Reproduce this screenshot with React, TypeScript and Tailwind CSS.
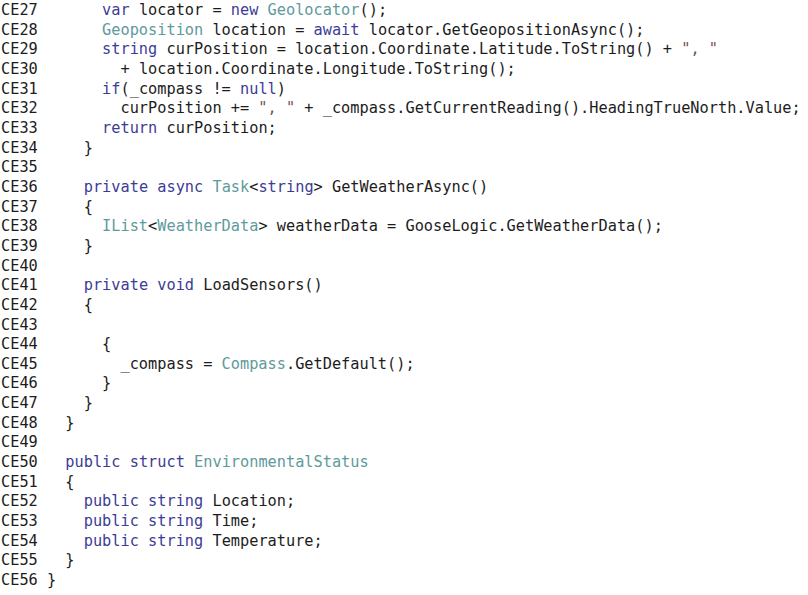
import React from "react";

const KEYWORDS = new Set([
  "var", "new", "await", "string", "if", "null", "return", "private", "async", "void", "public", "struct",
]);
const TYPES = new Set(["Geolocator", "Geoposition", "Task", "WeatherData", "IList", "Compass", "EnvironmentalStatus"]);

const lines: [number, number, string][] = [
  [27, 11, "var locator = new Geolocator();"],
  [28, 11, "Geoposition location = await locator.GetGeopositionAsync();"],
  [29, 11, 'string curPosition = location.Coordinate.Latitude.ToString() + ", "'],
  [30, 13, "+ location.Coordinate.Longitude.ToString();"],
  [31, 11, "if(_compass != null)"],
  [32, 13, 'curPosition += ", " + _compass.GetCurrentReading().HeadingTrueNorth.Value;'],
  [33, 11, "return curPosition;"],
  [34, 9, "}"],
  [35, 0, ""],
  [36, 9, "private async Task<string> GetWeatherAsync()"],
  [37, 9, "{"],
  [38, 11, "IList<WeatherData> weatherData = GooseLogic.GetWeatherData();"],
  [39, 9, "}"],
  [40, 0, ""],
  [41, 9, "private void LoadSensors()"],
  [42, 9, "{"],
  [43, 0, ""],
  [44, 11, "{"],
  [45, 13, "_compass = Compass.GetDefault();"],
  [46, 11, "}"],
  [47, 9, "}"],
  [48, 7, "}"],
  [49, 0, ""],
  [50, 7, "public struct EnvironmentalStatus"],
  [51, 7, "{"],
  [52, 9, "public string Location;"],
  [53, 9, "public string Time;"],
  [54, 9, "public string Temperature;"],
  [55, 7, "}"],
  [56, 5, "}"],
];

function tokenize(code: string) {
  const parts = code.split(/("[^"]*"|[A-Za-z_][A-Za-z0-9_]*)/).filter((p) => p !== "");
  return parts.map((p, i) => {
    let cls = "text-[#1c1c1c]";
    if (p.startsWith('"')) cls = "text-[#6e5454]";
    else if (KEYWORDS.has(p)) cls = "text-[#3c3c96]";
    else if (TYPES.has(p)) cls = "text-[#5e9a9c]";
    return (
      <span key={i} className={cls}>
        {p}
      </span>
    );
  });
}

export default function App() {
  return (
    <div className="w-[808px] h-[595px] bg-white overflow-hidden">
      <div
        className="flex flex-col pl-[1px] pt-[1px] text-[15.27px] text-[#1c1c1c] whitespace-pre"
        style={{ fontFamily: '"DejaVu Sans Mono", "Liberation Mono", monospace' }}
      >
        {lines.map(([n, col, code]) => {
          const label = "CE" + n;
          const pad = col > 0 ? " ".repeat(col - label.length) : "";
          return (
            <div key={n} className="h-[19.66px] leading-[19.66px]">
              <span>{label}</span>
              <span>{pad}</span>
              {tokenize(code)}
            </div>
          );
        })}
      </div>
    </div>
  );
}
